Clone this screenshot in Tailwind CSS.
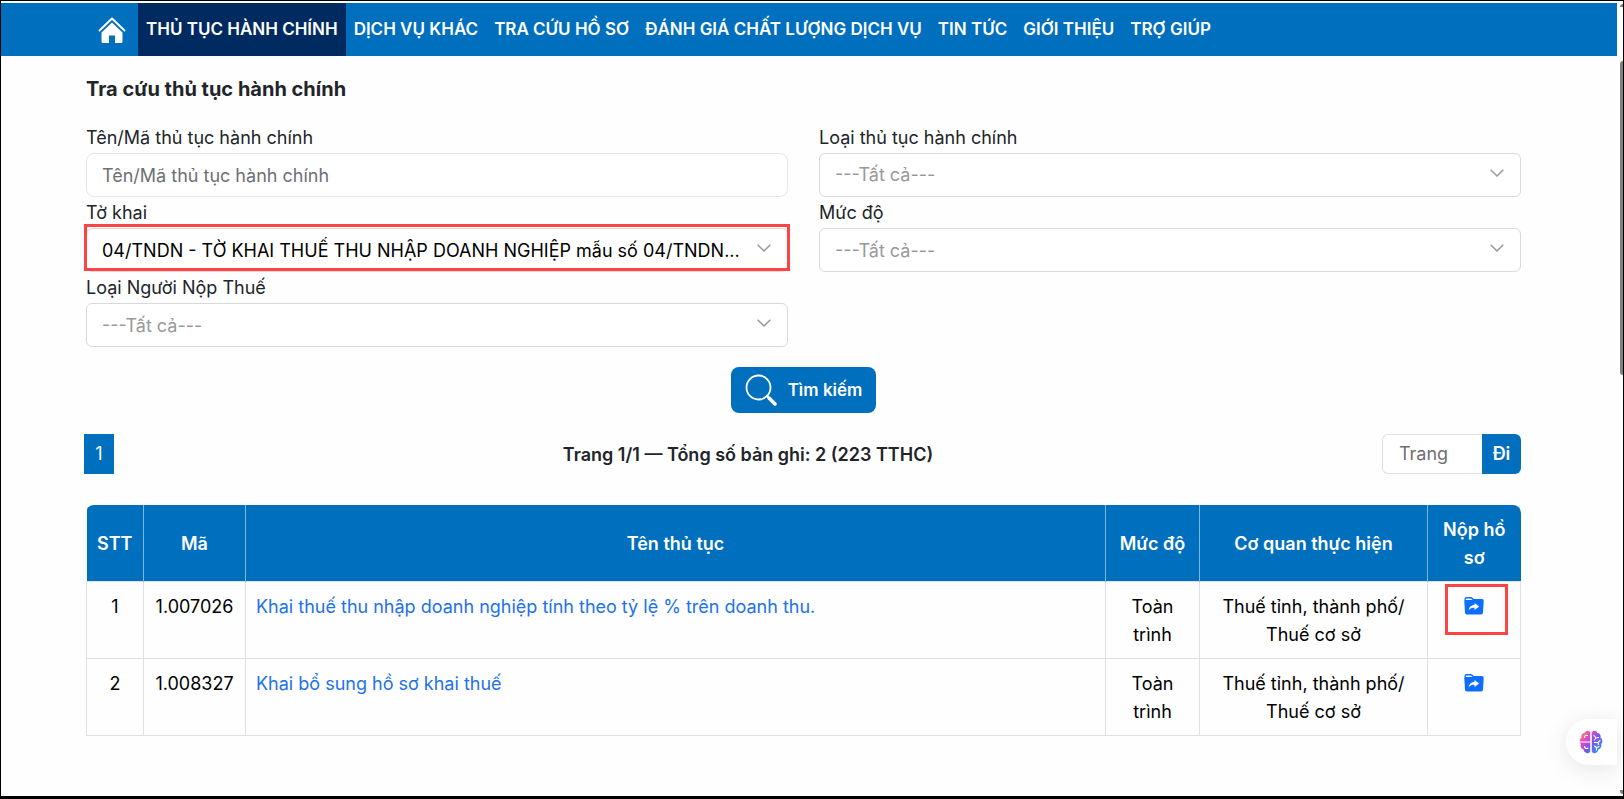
<!DOCTYPE html>
<html lang="vi">
<head>
  <meta charset="UTF-8" />
  <meta name="viewport" content="width=device-width, initial-scale=1.0" />
  <title>Tra cứu thủ tục hành chính</title>
  <script src="https://cdn.jsdelivr.net/npm/@tailwindcss/browser@4"></script>
</head>
<body class="h-screen overflow-hidden bg-[#fefefe] border border-b-3 border-black pt-[2px] relative font-[Inter,sans-serif] text-lg leading-7 text-[#212529]">
  <!-- Navigation -->
  <nav class="mr-[6px] h-[53px] bg-[#006fbd] pl-[85px] flex text-white text-[17px] leading-6 font-semibold whitespace-nowrap">
    <a href="#" aria-label="Trang chủ" class="w-[52px] flex items-center justify-center">
      <svg class="w-7 h-7" viewBox="0 0 28 28" fill="none">
        <path d="M1.5 14.5 14 2.5l12.500 12" stroke="#fff" stroke-width="2" stroke-linecap="round" stroke-linejoin="round" />
        <path d="M14 6.500 24.500 16.500V25.500a1.500 1.500 0 0 1-1.500 1.500H17v-7.500h-6V27H5a1.500 1.500 0 0 1-1.500-1.500V16.500z" fill="#fff" />
      </svg>
    </a>
    <a href="#" class="px-2 pt-[14px] bg-[#002b60]">THỦ TỤC HÀNH CHÍNH</a>
    <a href="#" class="px-2 pt-[14px]">DỊCH VỤ KHÁC</a>
    <a href="#" class="px-2 pt-[14px]">TRA CỨU HỒ SƠ</a>
    <a href="#" class="px-2 pt-[14px]">ĐÁNH GIÁ CHẤT LƯỢNG DỊCH VỤ</a>
    <a href="#" class="px-2 pt-[14px]">TIN TỨC</a>
    <a href="#" class="px-2 pt-[14px]">GIỚI THIỆU</a>
    <a href="#" class="px-2 pt-[14px]">TRỢ GIÚP</a>
  </nav>

  <main class="mr-[6px] pl-[85px] pr-[96px] pt-[19px]">
    <h1 class="text-xl leading-7 font-bold">Tra cứu thủ tục hành chính</h1>

    <!-- Search form -->
    <form>
      <div class="mt-[21px] grid grid-cols-2 gap-x-[31px] gap-y-[2px]">
        <div>
          <label for="ten" class="block">Tên/Mã thủ tục hành chính</label>
          <input id="ten" type="text" placeholder="Tên/Mã thủ tục hành chính" class="block w-full h-11 mt-px px-[15px] bg-white border border-[#e4e6e8] rounded-lg placeholder:text-[#6c7075]" />
        </div>
        <div>
          <label for="loai" class="block">Loại thủ tục hành chính</label>
          <div class="relative mt-px">
            <select id="loai" class="block appearance-none w-full h-11 pl-[15px] pr-8 bg-white border border-[#d9d9d9] rounded-md text-[#999]">
              <option>---Tất cả---</option>
            </select>
            <svg class="absolute right-[17px] top-4 w-[14px] h-2 pointer-events-none" viewBox="0 0 14 8" fill="none" stroke="#999" stroke-width="1.500"><path d="M.7.700 7 7l6.300-6.300" /></svg>
          </div>
        </div>
        <div>
          <label for="tokhai" class="block">Tờ khai</label>
          <div class="relative mt-px">
            <select id="tokhai" class="block appearance-none w-full h-11 pl-[15px] pr-4 pt-[2px] bg-white border border-[#d9d9d9] rounded-md text-black">
              <option>04/TNDN - TỜ KHAI THUẾ THU NHẬP DOANH NGHIỆP mẫu số 04/TNDN...</option>
            </select>
            <svg class="absolute right-[17px] top-4 w-[14px] h-2 pointer-events-none" viewBox="0 0 14 8" fill="none" stroke="#999" stroke-width="1.500"><path d="M.7.700 7 7l6.300-6.300" /></svg>
            <div class="absolute -inset-x-[2px] -top-1 bottom-px border-3 border-[#fb4444] pointer-events-none"></div>
          </div>
        </div>
        <div>
          <label for="mucdo" class="block">Mức độ</label>
          <div class="relative mt-px">
            <select id="mucdo" class="block appearance-none w-full h-11 pl-[15px] pr-8 pt-[2px] bg-white border border-[#d9d9d9] rounded-md text-[#999]">
              <option>---Tất cả---</option>
            </select>
            <svg class="absolute right-[17px] top-4 w-[14px] h-2 pointer-events-none" viewBox="0 0 14 8" fill="none" stroke="#999" stroke-width="1.500"><path d="M.7.700 7 7l6.300-6.300" /></svg>
          </div>
        </div>
        <div>
          <label for="nnt" class="block">Loại Người Nộp Thuế</label>
          <div class="relative mt-px">
            <select id="nnt" class="block appearance-none w-full h-11 pl-[15px] pr-8 pt-[2px] bg-white border border-[#d9d9d9] rounded-md text-[#999]">
              <option>---Tất cả---</option>
            </select>
            <svg class="absolute right-[17px] top-4 w-[14px] h-2 pointer-events-none" viewBox="0 0 14 8" fill="none" stroke="#999" stroke-width="1.500"><path d="M.7.700 7 7l6.300-6.300" /></svg>
          </div>
        </div>
      </div>
      <button type="button" class="mx-auto mt-5 h-[46px] w-[145px] bg-[#006fbd] rounded-lg flex items-center justify-center gap-[11px] text-white text-[17px] font-semibold">
        <svg class="w-8 h-8" viewBox="0 0 32 32" fill="none" stroke="#fff" stroke-linecap="round">
          <circle cx="13.500" cy="13.500" r="12" stroke-width="1.800" />
          <path d="m22 22 2.500 2.500" stroke-width="2" />
          <path d="m24 24 6 6" stroke-width="3.500" />
        </svg>
        Tìm kiếm
      </button>
    </form>

    <!-- Pagination -->
    <div class="mt-[21px] flex items-center justify-between">
      <button class="-ml-[2px] w-[30px] h-10 bg-[#006fbd] text-white">1</button>
      <p class="pt-[2px] font-semibold">Trang 1/1 — Tổng số bản ghi: 2 (223 TTHC)</p>
      <div class="flex h-10">
        <input type="text" aria-label="Trang" placeholder="Trang" class="w-[100px] pl-4 bg-white border border-r-0 border-[#dee2e6] rounded-l-md placeholder:text-[#6c7075]" />
        <button class="w-[39px] bg-[#006fbd] rounded-r-md text-white font-semibold">Đi</button>
      </div>
    </div>

    <!-- Results -->
    <div class="mt-[31px] rounded-t-lg overflow-hidden">
      <table class="w-full table-fixed border-collapse text-center text-black">
        <colgroup>
          <col class="w-[57px]" />
          <col class="w-[102px]" />
          <col />
          <col class="w-[94px]" />
          <col class="w-[228px]" />
          <col class="w-[93px]" />
        </colgroup>
        <thead class="bg-[#006fbd] text-white">
          <tr class="h-[76px]">
            <th class="font-semibold pt-[2px] border-r border-[#7fb7de]">STT</th>
            <th class="font-semibold pt-[2px] border-r border-[#7fb7de]">Mã</th>
            <th class="font-semibold pt-[2px] border-r border-[#7fb7de]">Tên thủ tục</th>
            <th class="font-semibold pt-[2px] border-r border-[#7fb7de]">Mức độ</th>
            <th class="font-semibold pt-[2px] border-r border-[#7fb7de]">Cơ quan thực hiện</th>
            <th class="font-semibold pt-[2px] px-[10px]">Nộp hồ sơ</th>
          </tr>
        </thead>
        <tbody>
          <tr class="h-[77px] align-top">
            <td class="border border-[#dee2e6] pt-[11px]">1</td>
            <td class="border border-[#dee2e6] pt-[11px]">1.007026</td>
            <td class="border border-[#dee2e6] pt-[11px] px-[10px] text-left"><a href="#" class="text-[#2272e8]">Khai thuế thu nhập doanh nghiệp tính theo tỷ lệ % trên doanh thu.</a></td>
            <td class="border border-[#dee2e6] pt-[11px] px-[10px]">Toàn trình</td>
            <td class="border border-[#dee2e6] pt-[11px] px-[10px]">Thuế tỉnh, thành phố/ Thuế cơ sở</td>
            <td class="border border-[#dee2e6] pt-[10px] relative">
              <a href="#" aria-label="Nộp hồ sơ" class="flex h-7 items-center justify-center">
                <svg class="w-5 h-[18px]" viewBox="0 0 20 18"><path d="M2.500 0h4.200c.8 0 1.300.3 1.900.8l.6.600c.4.400.8.600 1.400.600H17.700A2 2 0 0 1 19.700 4.200L19 15.500A2 2 0 0 1 17 17.500H3A2 2 0 0 1 1 15.500L.3 4.200.5 2A2 2 0 0 1 2.500 0zM1.700 3.100Q2 3 2.500 3H8.800Q8.300 2.800 7.700 2.200 7.200 1.500 6.500 1.500H2.500Q1.800 1.500 1.700 2.200z" fill="#0d6efd" fill-rule="evenodd" /><path d="M10.500 6v2C6.800 8 5 10.500 4.800 13.300 6.200 11.200 8 10.800 10.500 10.800V13L15.200 9.500z" fill="#fff" /></svg>
              </a>
              <div class="absolute left-[17px] top-[2px] w-[63px] h-[51px] border-3 border-[#fb4444] pointer-events-none"></div>
            </td>
          </tr>
          <tr class="h-[77px] align-top">
            <td class="border border-[#dee2e6] pt-[11px]">2</td>
            <td class="border border-[#dee2e6] pt-[11px]">1.008327</td>
            <td class="border border-[#dee2e6] pt-[11px] px-[10px] text-left"><a href="#" class="text-[#2272e8]">Khai bổ sung hồ sơ khai thuế</a></td>
            <td class="border border-[#dee2e6] pt-[11px] px-[10px]">Toàn trình</td>
            <td class="border border-[#dee2e6] pt-[11px] px-[10px]">Thuế tỉnh, thành phố/ Thuế cơ sở</td>
            <td class="border border-[#dee2e6] pt-[10px]">
              <a href="#" aria-label="Nộp hồ sơ" class="flex h-7 items-center justify-center">
                <svg class="w-5 h-[18px]" viewBox="0 0 20 18"><path d="M2.500 0h4.200c.8 0 1.300.3 1.900.8l.6.600c.4.400.8.600 1.400.600H17.700A2 2 0 0 1 19.700 4.200L19 15.500A2 2 0 0 1 17 17.500H3A2 2 0 0 1 1 15.500L.3 4.200.5 2A2 2 0 0 1 2.500 0zM1.700 3.100Q2 3 2.500 3H8.800Q8.300 2.800 7.700 2.200 7.200 1.500 6.500 1.500H2.500Q1.800 1.500 1.700 2.200z" fill="#0d6efd" fill-rule="evenodd" /><path d="M10.500 6v2C6.800 8 5 10.500 4.800 13.300 6.200 11.200 8 10.800 10.500 10.800V13L15.200 9.500z" fill="#fff" /></svg>
              </a>
            </td>
          </tr>
        </tbody>
      </table>
    </div>
  </main>

  <!-- Assistant button -->
  <button aria-label="Trợ lý" class="absolute right-[6px] bottom-[31px] w-[51px] h-[46px] pl-[13px] bg-white rounded-l-full shadow-[0_4px_24px_rgba(0,0,0,0.1)]">
    <svg class="w-6 h-6" viewBox="0 0 24 24" fill="none">
      <defs>
        <linearGradient id="brain" x1="2" y1="2" x2="22" y2="20" gradientUnits="userSpaceOnUse">
          <stop offset="0" stop-color="#ff8a3c" />
          <stop offset=".3" stop-color="#e44bc4" />
          <stop offset=".6" stop-color="#7a55e6" />
          <stop offset="1" stop-color="#2f9bff" />
        </linearGradient>
      </defs>
      <path d="M11.200 2.500C10.500.2 6.500 0 5.800 3 3 3 1.800 5.500 2.600 7.600.2 9 0 12.500 1.800 14 1 16.500 2.300 19 4.600 19.400 5.200 23.500 10 24.500 11.200 21.500zM12.800 2.500C13.500.2 17.500 0 18.200 3 21 3 22.200 5.500 21.400 7.600 23.800 9 24 12.500 22.200 14 23 16.500 21.700 19 19.400 19.400 18.800 23.500 14 24.500 12.800 21.500z" fill="url(#brain)" />
      <path d="M1 12h7.500M11.200 12H9M5.500 7.500C5.500 5.500 7 5 8.500 5.500M5.500 16.500C6 18.500 7.500 19 9 18M15 5.500l2 2.500 2.500-.5M17 8l-1.500 2M15.500 12.500H19l2-2M19 12.500l.5 2M15.500 16l2 1.500 2.500-1M17.500 17.500v2.500" stroke="#fff" stroke-width="1.100" stroke-linecap="round" />
    </svg>
  </button>

  <!-- Scrollbar -->
  <div class="absolute right-0 top-[60px] w-[3px] h-[314px] bg-[#7f7f7f] rounded-l-sm"></div>
  <div class="absolute right-0 top-[3px] w-[3px] h-[3px] bg-[#7f7f7f] rounded-tl-sm"></div>
  <div class="absolute right-0 bottom-[2px] w-[3px] h-1 bg-[#7f7f7f] rounded-bl-sm"></div>
</body>
</html>
